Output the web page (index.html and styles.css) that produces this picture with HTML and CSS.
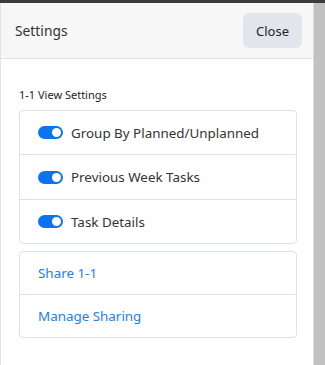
FILE: index.html
```html
<!DOCTYPE html>
<html>
  <head>
    <title>Settings</title>
    <link rel="stylesheet" href="styles.css">
  </head>
  <body>
    <div class="topbar"></div>
    <div class="main">
      <div class="panel">
        <div class="panel-header">
          <span class="panel-title">Settings</span>
          <button class="btn-close">Close</button>
        </div>
        <div class="panel-body">
          <div class="section-title">1-1 View Settings</div>
          <ul class="list-group toggles">
            <li class="list-item">
              <span class="switch on"></span>
              <span>Group By Planned/Unplanned</span>
            </li>
            <li class="list-item">
              <span class="switch on"></span>
              <span>Previous Week Tasks</span>
            </li>
            <li class="list-item">
              <span class="switch on"></span>
              <span>Task Details</span>
            </li>
          </ul>
          <ul class="list-group links">
            <li class="list-item"><a href="#">Share 1-1</a></li>
            <li class="list-item"><a href="#">Manage Sharing</a></li>
          </ul>
        </div>
      </div>
      <div class="scrollbar"></div>
    </div>
  </body>
</html>
```

FILE: styles.css
```css
body {
  margin: 0;
  height: 100vh;
  display: flex;
  flex-direction: column;
  background: #fff;
  font-family: "Noto Sans", "Open Sans", sans-serif;
  color: #333;
  overflow: hidden;
}

.topbar {
  height: 3px;
  background: #3a3a3a;
  flex-shrink: 0;
}

.main {
  flex: 1;
  display: flex;
}

.panel {
  width: 312px;
  border-left: 1px solid #e3e3e3;
  border-right: 1px solid #dcdcdc;
  background: #fff;
  display: flex;
  flex-direction: column;
}

.panel-header {
  height: 56px;
  box-sizing: border-box;
  display: flex;
  align-items: center;
  justify-content: space-between;
  padding: 0 11px 0 14px;
  background: #f7f7f7;
  border-bottom: 1px solid #dee2e6;
}

.panel-title {
  font-size: 13.8px;
  color: #333;
}

.btn-close {
  width: 59px;
  height: 35px;
  border: none;
  border-radius: 6px;
  background: #e2e6ea;
  color: #212529;
  font-family: inherit;
  font-size: 13px;
  padding: 0;
}

.panel-body {
  padding: 28px 16px 0 18px;
}

.section-title {
  font-size: 11px;
  color: #222;
  margin-bottom: 8px;
}

.list-group {
  list-style: none;
  margin: 0 0 7px;
  padding: 0;
  border: 1px solid #dee2e6;
  border-radius: 4px;
}

.list-item {
  display: flex;
  align-items: center;
  gap: 8px;
  height: 43px;
  padding: 0 18px;
  font-size: 13.4px;
  color: #333;
  border-top: 1px solid #dee2e6;
}

.list-item:first-child {
  border-top: none;
}

.toggles .list-item:nth-child(2) {
  height: 44px;
}

.links .list-item {
  height: 42px;
}

.list-item a {
  color: #1a7ff0;
  text-decoration: none;
}

.switch {
  position: relative;
  width: 25px;
  height: 13px;
  border-radius: 7px;
  background: #0b72f0;
  flex-shrink: 0;
}

.switch::after {
  content: "";
  position: absolute;
  top: 2px;
  right: 2px;
  width: 9px;
  height: 9px;
  border-radius: 50%;
  background: #fff;
}

.scrollbar {
  flex: 1;
  background: #c1c1c1;
}
```
